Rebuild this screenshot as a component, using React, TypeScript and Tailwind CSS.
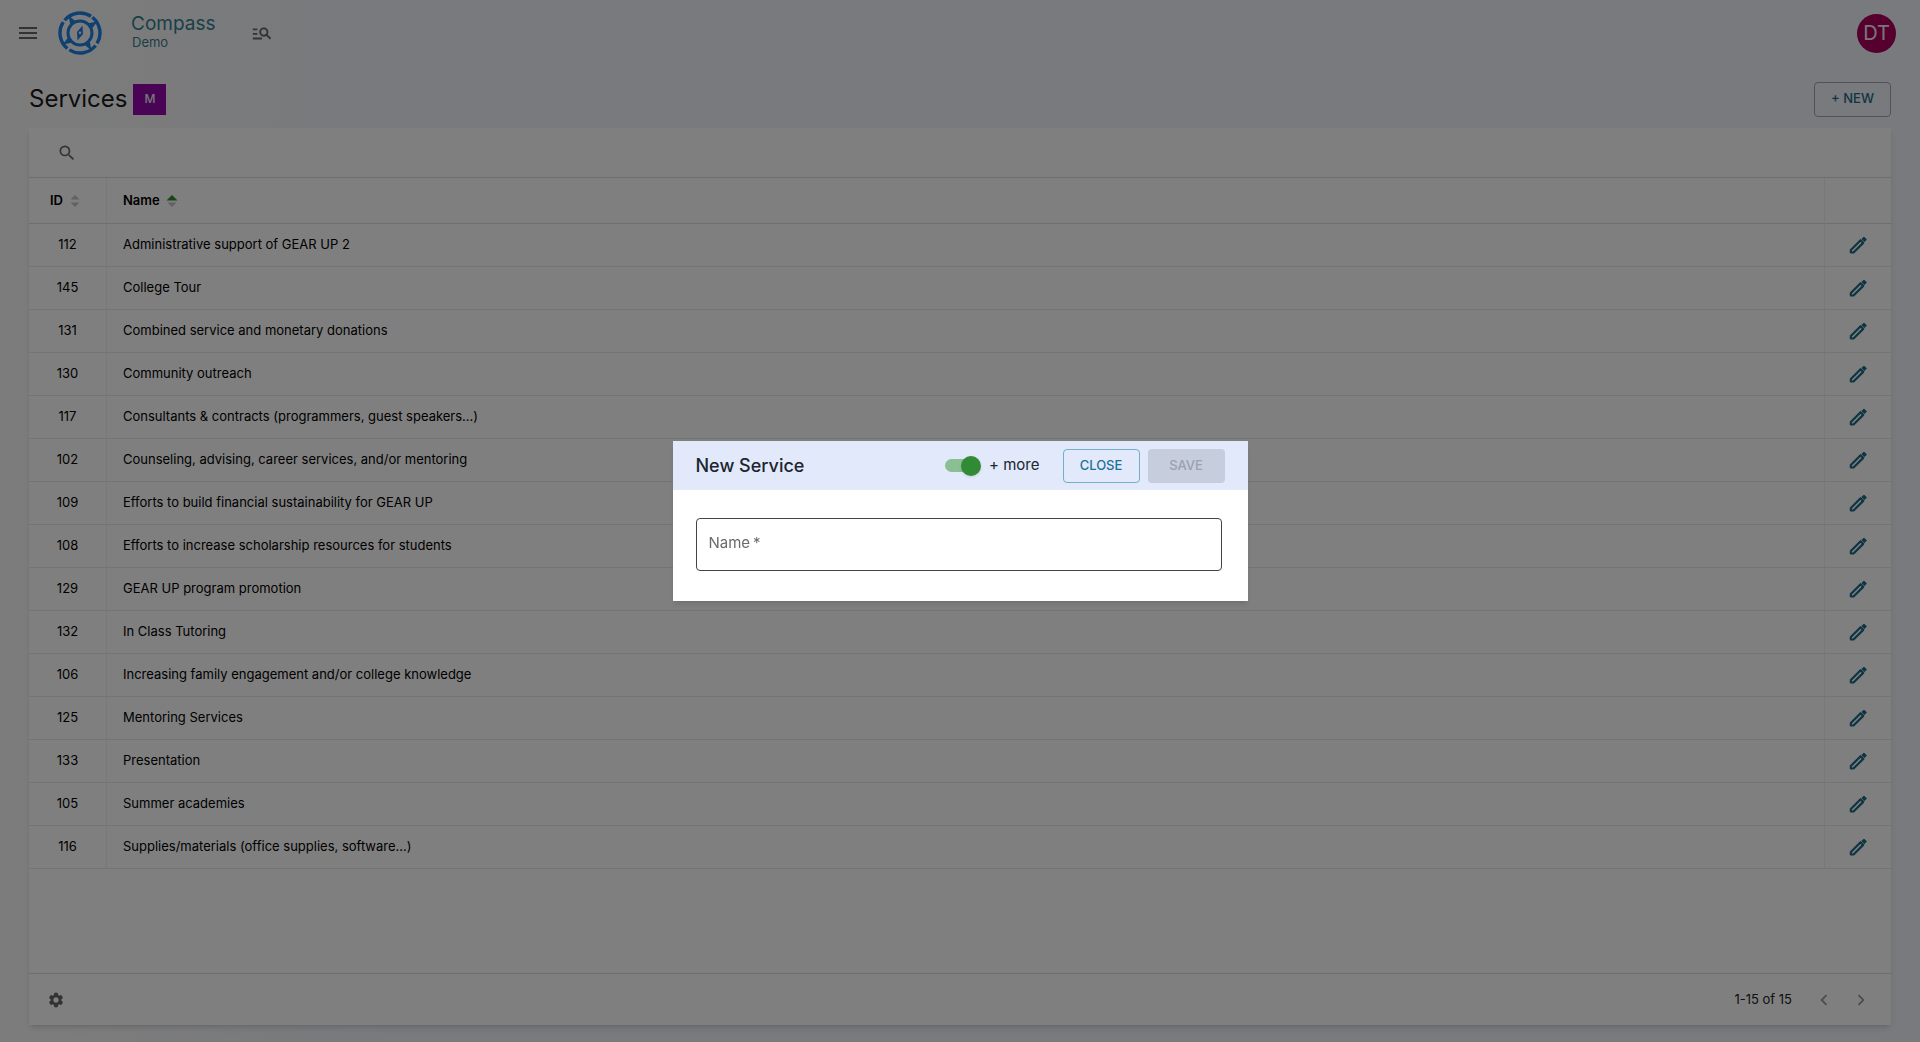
import React from "react";
import {
  MdChevronLeft,
  MdChevronRight,
  MdManageSearch,
  MdMenu,
  MdSearch,
  MdSettings,
} from "react-icons/md";

const services: { id: number; name: string }[] = [
  { id: 112, name: "Administrative support of GEAR UP 2" },
  { id: 145, name: "College Tour" },
  { id: 131, name: "Combined service and monetary donations" },
  { id: 130, name: "Community outreach" },
  { id: 117, name: "Consultants & contracts (programmers, guest speakers...)" },
  { id: 102, name: "Counseling, advising, career services, and/or mentoring" },
  { id: 109, name: "Efforts to build financial sustainability for GEAR UP" },
  { id: 108, name: "Efforts to increase scholarship resources for students" },
  { id: 129, name: "GEAR UP program promotion" },
  { id: 132, name: "In Class Tutoring" },
  { id: 106, name: "Increasing family engagement and/or college knowledge" },
  { id: 125, name: "Mentoring Services" },
  { id: 133, name: "Presentation" },
  { id: 105, name: "Summer academies" },
  { id: 116, name: "Supplies/materials (office supplies, software...)" },
];

function Logo() {
  return (
    <svg viewBox="0 0 44 44" className="size-11" fill="none" stroke="#1e80e4" aria-hidden="true">
      <circle cx="22" cy="22" r="20" strokeWidth="3.4" strokeDasharray="28.9 2.516" transform="rotate(-52 22 22)" />
      <circle cx="22" cy="22" r="12" strokeWidth="3" />
      <g fill="#1e80e4" stroke="none">
        <path d="M10.5 4.500 18.500 11l-6 4z" />
        <path d="M39.500 10.500 33 18.500l-4-6z" />
        <path d="M33.500 39.500 25.500 33l6-4z" />
        <path d="M4.500 33.500 11 25.500l4 6z" />
        <path fillRule="evenodd" d="M24.500 14.500 25 23l-5.500 6.500L19 21zM22 20.500a1.300 1.300 0 1 0 0 2.600 1.300 1.300 0 0 0 0-2.600z" />
      </g>
    </svg>
  );
}

function PencilIcon() {
  return (
    <svg viewBox="0 0 24 24" className="size-[22px]" fill="none" stroke="currentColor" aria-hidden="true">
      <path d="M4.200 17.400 14.800 6.800l2.900 2.900L7.100 20.200H4.200z" strokeWidth="2.400" strokeLinejoin="round" />
      <path d="M16.200 5.400l1.500-1.500q.8-.7 1.600 0l1.300 1.300q.8.800 0 1.600l-1.500 1.500z" fill="currentColor" strokeWidth="1" />
    </svg>
  );
}

function SortArrows({ active }: { active?: boolean }) {
  return (
    <svg viewBox="0 0 12 12" className="h-3 w-3" aria-hidden="true">
      <path d={active ? "M6 0l5.500 5.500H.5z" : "M6 0l4.500 4.500h-9z"} fill={active ? "#2e8b2e" : "#c4c4c4"} />
      <path d="M6 12L1.500 7.500h9z" fill="#c4c4c4" />
    </svg>
  );
}

function Header() {
  return (
    <header className="flex h-[66px] items-center pr-6 pl-4">
      <button type="button" aria-label="Open menu" className="text-[#666]">
        <MdMenu className="size-6" />
      </button>
      <div className="ml-[18px]">
        <Logo />
      </div>
      <div className="ml-7 flex flex-col text-[#33808f]">
        <span className="pl-px text-[19px] leading-[18px]">Compass</span>
        <span className="pl-0.5 text-[13px] leading-[18px]">Demo</span>
      </div>
      <button type="button" aria-label="Search records" className="ml-9 text-[#666]">
        <MdManageSearch className="size-[22px]" />
      </button>
      <button
        type="button"
        aria-label="Account"
        className="ml-auto size-[39px] rounded-full bg-[#ad0060] text-xl text-[#eee]"
      >
        DT
      </button>
    </header>
  );
}

function ServicesTable() {
  return (
    <table className="w-full table-fixed border-separate border-spacing-0 text-[13px] text-black">
      <colgroup>
        <col className="w-[78px]" />
        <col />
        <col className="w-[66px]" />
      </colgroup>
      <thead>
        <tr className="h-[46px]">
          <th className="border-r border-b border-r-[#f0f0f0] border-b-[#dcdcdc] p-0 pr-1 font-semibold">
            <button type="button" className="flex w-full items-center justify-center gap-1.5">
              ID <SortArrows />
            </button>
          </th>
          <th className="border-r border-b border-r-[#f0f0f0] border-b-[#dcdcdc] px-4 py-0 font-semibold">
            <button type="button" className="flex items-center gap-1.5">
              Name <SortArrows active />
            </button>
          </th>
          <th className="border-b border-[#dcdcdc]" aria-label="Actions" />
        </tr>
      </thead>
      <tbody>
        {services.map((s) => (
          <tr key={s.id} className="h-[43px]">
            <td className="border-r border-b border-r-[#f0f0f0] border-b-[#e8e8e8] p-0 text-center">{s.id}</td>
            <td className="border-r border-b border-r-[#f0f0f0] border-b-[#e8e8e8] px-4 py-0">{s.name}</td>
            <td className="border-b border-[#e8e8e8] p-0">
              <button type="button" aria-label={`Edit ${s.name}`} className="mx-auto block text-[#1f6a85]">
                <PencilIcon />
              </button>
            </td>
          </tr>
        ))}
      </tbody>
    </table>
  );
}

function NewServiceDialog() {
  return (
    <div className="fixed inset-0 flex items-center justify-center bg-black/50">
      <form
        role="dialog"
        aria-modal="true"
        aria-labelledby="dialog-title"
        className="w-[575px] bg-white shadow-md"
        onSubmit={(e) => e.preventDefault()}
      >
        <div className="flex h-[49px] items-center bg-[#e1e9fb] px-[23px]">
          <h2 id="dialog-title" className="text-lg font-medium text-[#20242c]">
            New Service
          </h2>
          <label className="ml-auto flex items-center gap-2 text-[15px] text-[#20242c]">
            <span className="relative flex h-5 w-9 items-center">
              <input type="checkbox" role="switch" defaultChecked className="sr-only" />
              <span className="h-[13px] w-[33px] rounded-full bg-[#8abf94]" />
              <span className="absolute right-0 size-5 rounded-full bg-[#318b35] shadow" />
            </span>
            <span>+ more</span>
          </label>
          <button
            type="button"
            className="ml-[23px] h-[34px] w-[77px] rounded-sm border border-[#74afc6] text-[13px] font-medium text-[#1b7296]"
          >
            CLOSE
          </button>
          <button
            type="submit"
            disabled
            className="ml-2 h-[34px] w-[77px] rounded-sm bg-[#c6cddd] text-[13px] font-medium text-[#9ba1af]"
          >
            SAVE
          </button>
        </div>
        <div className="pt-7 pr-[26px] pb-[30px] pl-[23px]">
          <div className="relative">
            <input
              id="service-name"
              type="text"
              required
              className="peer block h-[53px] w-full rounded-sm border border-[#444] bg-white px-3 text-[15px] text-black outline-none"
            />
            <label
              htmlFor="service-name"
              className="pointer-events-none absolute inset-y-0 left-[13px] flex items-center gap-[3px] pb-0.5 text-[15px] text-[#6b6b6b] peer-valid:hidden"
            >
              Name <span aria-hidden="true">*</span>
            </label>
          </div>
        </div>
      </form>
    </div>
  );
}

export default function App() {
  return (
    <div className="flex min-h-screen flex-col bg-linear-to-r from-[#f9f9f9] via-[#f2f4fa] via-20% to-[#f2f4fa] font-['Inter',sans-serif]">
      <Header />
      <main className="flex flex-1 flex-col px-[29px] pb-[17px]">
        <div className="flex h-[62px] items-center pt-1">
          <h1 className="text-2xl text-[#1a1a1a]">Services</h1>
          <button type="button" className="ml-1.5 h-[31px] w-[33px] bg-[#9209ac] text-xs font-medium text-[#eee]">
            M
          </button>
          <button
            type="button"
            className="ml-auto h-[35px] w-[77px] rounded-sm border border-[#a0a5ac] text-[13px] font-medium text-[#1f6a85]"
          >
            + NEW
          </button>
        </div>
        <section className="flex flex-1 flex-col bg-white shadow-md">
          <div className="flex h-[50px] items-center border-b border-[#dcdcdc] pl-7">
            <button type="button" aria-label="Search table" className="text-[#666]">
              <MdSearch className="size-5" />
            </button>
          </div>
          <ServicesTable />
          <footer className="mt-auto flex h-[52px] items-center border-t border-[#dcdcdc] pr-[19px] pl-[18px] text-[13px] text-[#222]">
            <button type="button" aria-label="Table settings" className="text-[#666]">
              <MdSettings className="size-[18px]" />
            </button>
            <span className="ml-auto">1-15 of 15</span>
            <button type="button" disabled aria-label="Previous page" className="ml-[21px] text-[#999]">
              <MdChevronLeft className="size-[22px]" />
            </button>
            <button type="button" disabled aria-label="Next page" className="ml-[15px] text-[#999]">
              <MdChevronRight className="size-[22px]" />
            </button>
          </footer>
        </section>
      </main>
      <NewServiceDialog />
    </div>
  );
}
